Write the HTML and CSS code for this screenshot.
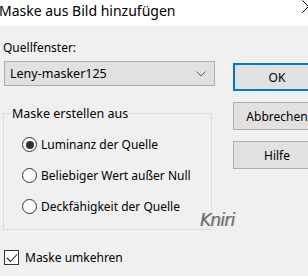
FILE: index.html
```html
<!DOCTYPE html>
<html lang="de">
<head>
  <meta charset="UTF-8" />
  <title>Maske aus Bild hinzufügen</title>
  <link rel="stylesheet" href="styles.css">
</head>
<body>
  <div class="titlebar">
    <div class="title">Maske aus Bild hinzufügen</div>
    <div class="close">
      <svg width="12" height="14" viewBox="0 0 12 14"><path d="M0.5 0.5 L6.5 6.5 L0.5 12.5" fill="none" stroke="#000" stroke-width="1"/></svg>
    </div>
  </div>

  <div class="dialog">
    <div class="left">
      <label class="field-label">Quellfenster:</label>
      <div class="combo">
        <span>Leny-masker125</span>
        <svg width="10" height="6" viewBox="0 0 10 6"><path d="M0.5 0.5 L5 5 L9.5 0.5" fill="none" stroke="#606060" stroke-width="1"/></svg>
      </div>

      <fieldset class="group">
        <legend>Maske erstellen aus</legend>
        <div class="radio"><span class="dot checked"></span>Luminanz der Quelle</div>
        <div class="radio"><span class="dot"></span>Beliebiger Wert außer Null</div>
        <div class="radio"><span class="dot"></span>Deckfähigkeit der Quelle</div>
      </fieldset>

      <div class="check">
        <span class="box">
          <svg width="12" height="10" viewBox="0 0 12 10"><path d="M1 5 L4.5 8.5 L11 1.5" fill="none" stroke="#222" stroke-width="1.1"/></svg>
        </span>
        Maske umkehren
      </div>
    </div>

    <div class="buttons">
      <div class="btn default">OK</div>
      <div class="btn">Abbrechen</div>
      <div class="btn">Hilfe</div>
    </div>

    <div class="mark">Kniri</div>
  </div>
</body>
</html>
```

FILE: styles.css
```css
body {
  margin: 0;
  width: 308px;
  height: 276px;
  overflow: hidden;
  background-color: #f0f0f0;
  font-family: 'Noto Sans', sans-serif;
  font-size: 12px;
  color: #000;
}

.titlebar {
  display: flex;
  justify-content: space-between;
  align-items: center;
  height: 26px;
  background-color: #fff;
}

.title {
  font-size: 14px;
  margin-top: -6px;
  margin-left: -1px;
}

.close {
  margin-right: -6px;
  margin-top: -8px;
}

.dialog {
  position: relative;
  display: flex;
  padding-left: 4px;
}

.left {
  width: 211px;
  flex-shrink: 0;
}

.field-label {
  display: block;
  margin-top: 13px;
  margin-left: -1px;
  height: 22px;
}

.combo {
  display: flex;
  justify-content: space-between;
  align-items: center;
  height: 23px;
  padding: 0 8px 0 5px;
  background-color: #e1e1e1;
  border: 1px solid #adadad;
  font-size: 12.5px;
}

.group {
  margin: 19px 0 0 -1px;
  padding: 7px 0 7px 0;
  width: 209px;
  box-sizing: border-box;
  border: 1px solid #dcdcdc;
}

.group legend {
  padding: 0 1px;
  margin-left: 7px;
  font-size: 12.5px;
}

.radio {
  display: flex;
  align-items: center;
  height: 31px;
  padding-left: 18px;
}

.dot {
  width: 15px;
  height: 15px;
  border: 1px solid #333;
  border-radius: 50%;
  background-color: #fff;
  margin-right: 4px;
  box-sizing: border-box;
  position: relative;
}

.dot.checked::after {
  content: '';
  position: absolute;
  left: 2.5px;
  top: 2.5px;
  width: 8px;
  height: 8px;
  border-radius: 50%;
  background-color: #333;
}

.check {
  display: flex;
  align-items: center;
  margin-top: 19px;
}

.box {
  display: flex;
  justify-content: center;
  align-items: center;
  width: 13px;
  height: 13px;
  border: 1px solid #333;
  background-color: #fff;
  margin-right: 6px;
}

.buttons {
  display: flex;
  flex-direction: column;
  gap: 11px;
  margin-left: 18px;
  margin-top: 37px;
  flex-shrink: 0;
}

.btn {
  display: flex;
  justify-content: center;
  align-items: center;
  width: 86px;
  height: 26px;
  background-color: #e1e1e1;
  border: 1px solid #adadad;
}

.btn.default {
  border: 2px solid #0078d7;
  height: 24px;
  width: 84px;
}

.mark {
  position: absolute;
  left: 200px;
  top: 184px;
  font-family: 'DejaVu Sans', sans-serif;
  font-style: italic;
  font-size: 17px;
  color: #6a6a6a;
  letter-spacing: -0.8px;
  text-shadow: 1px 0 0 #c8c8c8;
}
```
